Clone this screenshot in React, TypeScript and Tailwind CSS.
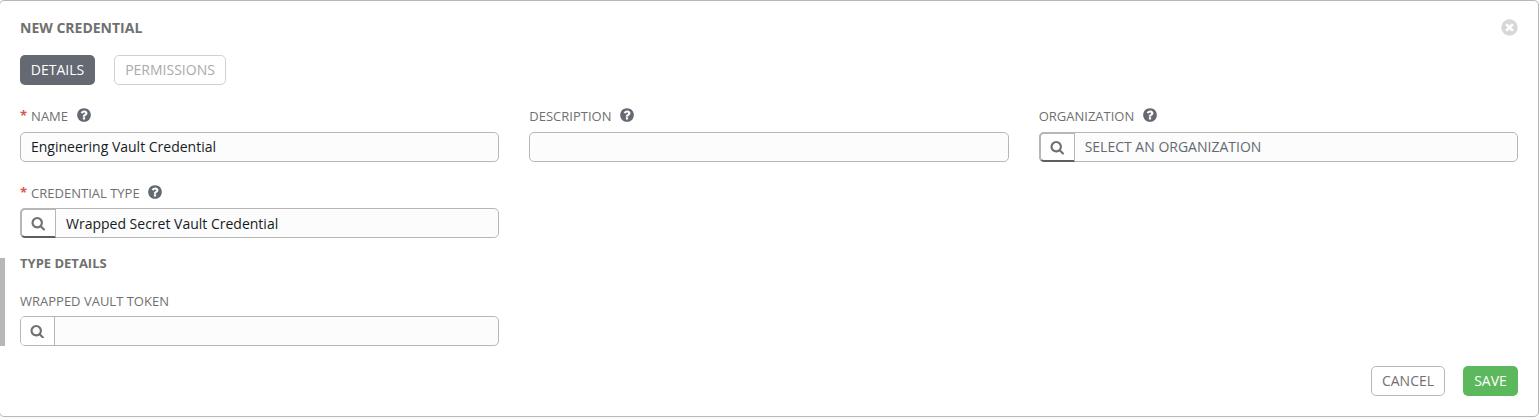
import type { ReactNode } from "react";

const HELP_PATH =
  "M1024 1376v-192q0-14-9-23t-23-9h-192q-14 0-23 9t-9 23v192q0 14 9 23t23 9h192q14 0 23-9t9-23zm256-672q0-88-55.5-163t-138.5-116-170-41q-243 0-371 213-15 24 8 42l132 100q7 6 19 6 16 0 25-12 53-68 86-92 34-24 86-24 48 0 85.5 26t37.5 59q0 38-20 61t-68 45q-63 28-115.5 86.5t-52.5 125.5v36q0 14 9 23t23 9h192q14 0 23-9t9-23q0-19 21.5-49.5t54.5-49.5q32-18 49-28.5t46-35 44.5-48 28-60.5 12.5-81zm384 192q0 209-103 385.5t-279.5 279.5-385.5 103-385.5-103-279.5-279.5-103-385.5 103-385.5 279.5-279.5 385.5-103 385.5 103 279.5 279.5 103 385.5z";

const SEARCH_PATH =
  "M1216 832q0-185-131.5-316.5t-316.5-131.5-316.5 131.5-131.5 316.5 131.5 316.5 316.5 131.5 316.5-131.5 131.5-316.5zm512 832q0 52-38 90t-90 38q-54 0-90-38l-343-342q-179 124-399 124-143 0-273.5-55.5t-225-150-150-225-55.5-273.5 55.5-273.5 150-225 225-150 273.5-55.5 273.5 55.5 225 150 150 225 55.5 273.5q0 220-124 399l343 343q37 37 37 90z";

const CLOSE_PATH =
  "M1277 1122q0-26-19-45l-181-181 181-181q19-19 19-45 0-27-19-46l-90-90q-19-19-46-19-26 0-45 19l-181 181-181-181q-19-19-45-19-27 0-46 19l-90 90q-19 19-19 46 0 26 19 45l181 181-181 181q-19 19-19 45 0 27 19 46l90 90q19 19 46 19 26 0 45-19l181-181 181 181q19 19 45 19 27 0 46-19l90-90q19-19 19-46zm387-226q0 209-103 385.5t-279.5 279.5-385.5 103-385.5-103-279.5-279.5-103-385.5 103-385.5 279.5-279.5 385.5-103 385.5 103 279.5 279.5 103 385.5z";

function Icon({ path, className }: { path: string; className: string }) {
  return (
    <svg viewBox="0 0 1792 1792" className={className}>
      <path d={path} />
    </svg>
  );
}

type FieldProps = {
  label: string;
  required?: boolean;
  help?: boolean;
  className?: string;
  children?: ReactNode;
};

function Field({ label, required, help, className = "pb-[6px]", children }: FieldProps) {
  return (
    <div className="min-w-0">
      <div className={`flex items-center text-[13px] leading-5 text-[#707070] ${className}`}>
        {required && <span className="mr-1 font-bold text-[#d9534f]">*</span>}
        <span className="relative top-px">{label}</span>
        {help && <Icon path={HELP_PATH} className="ml-[7.5px] size-4 fill-[#646972]" />}
      </div>
      <div className="flex h-[30px] rounded-[5px] border border-[#b7b7b7] bg-[#fcfcfc] text-sm leading-7">
        {children}
      </div>
    </div>
  );
}

function LookupButton({ raised }: { raised?: boolean }) {
  return (
    <button
      className={
        raised
          ? "-my-px -ml-px flex w-9 items-center justify-center rounded-l-[5px] border-2 border-r border-[#b7b7b7] border-b-[#5e5e5e] bg-white pt-px"
          : "flex w-[34px] items-center justify-center rounded-l-[4px] border-r border-[#b7b7b7] bg-white"
      }
    >
      <Icon path={SEARCH_PATH} className="size-[14.5px] fill-[#707070]" />
    </button>
  );
}

export default function App() {
  return (
    <div className="h-[420px] overflow-hidden bg-[#fafafa] font-['Open_Sans',sans-serif]">
      <div className="-ml-px mr-px flex h-[417px] flex-col rounded-[5px] border border-[#b7b7b7] bg-white pr-5">
        <div className="flex h-[54px] items-center justify-between pl-5">
          <h1 className="text-sm font-bold text-[#707070]">NEW CREDENTIAL</h1>
          <button className="-mr-px pb-px">
            <Icon path={CLOSE_PATH} className="size-[19px] fill-[#d7d7d7]" />
          </button>
        </div>

        <div className="flex gap-[19px] pl-5 text-sm">
          <button className="h-[30px] w-[75px] rounded-[5px] bg-[#646972] text-white">DETAILS</button>
          <button className="h-[30px] w-[112px] rounded-[5px] border border-[#d1d1d1] text-[#aaaaaa]">
            PERMISSIONS
          </button>
        </div>

        <div className="mt-5 grid grid-cols-3 gap-x-[30px] gap-y-5 pl-5">
          <Field label="NAME" required help className="pb-[7px]">
            <span className="pl-[10px] text-[#161b1f]">Engineering Vault Credential</span>
          </Field>
          <Field label="DESCRIPTION" help className="pb-[7px]" />
          <Field label="ORGANIZATION" help className="pb-[7px]">
            <LookupButton raised />
            <span className="pl-[10px] text-[#646972]">SELECT AN ORGANIZATION</span>
          </Field>
          <Field label="CREDENTIAL TYPE" required help>
            <LookupButton raised />
            <span className="pt-px pl-[10px] text-[#161b1f]">Wrapped Secret Vault Credential</span>
          </Field>
        </div>

        <section className="mt-5 h-[88px] border-l-[5px] border-[#b7b7b7] pl-[15px]">
          <h2 className="h-8 text-[13px] leading-[10px] font-bold text-[#707070]">TYPE DETAILS</h2>
          <div className="grid grid-cols-3 gap-x-[30px]">
            <Field label="WRAPPED VAULT TOKEN">
              <LookupButton />
            </Field>
          </div>
        </section>

        <div className="mt-5 flex justify-end gap-[18px] text-sm">
          <button className="h-[30px] w-[74px] rounded-[5px] border border-[#b7b7b7] text-[#707070]">
            CANCEL
          </button>
          <button className="h-[30px] w-[55px] rounded-[5px] bg-[#5cb85c] text-white">SAVE</button>
        </div>
      </div>
    </div>
  );
}
